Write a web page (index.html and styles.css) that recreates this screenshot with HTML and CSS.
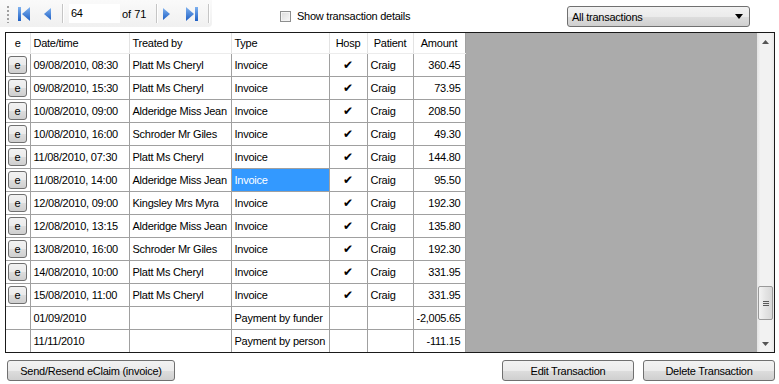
FILE: index.html
```html
<!DOCTYPE html>
<html>
<head>
<meta charset="utf-8">
<link rel="stylesheet" href="styles.css">
</head>
<body>
<div class="app">
  <div class="topbar">
    <div class="toolstrip">
      <span class="grip"></span>
      <span class="tbtn first"><svg width="13" height="14" viewBox="0 0 13 14"><defs><linearGradient id="bl" x1="0" y1="0" x2="0" y2="1"><stop offset="0" stop-color="#7fb2f0"/><stop offset="1" stop-color="#1e5fc4"/></linearGradient></defs><rect x="0" y="0" width="3" height="14" fill="url(#bl)"/><path d="M12 0 L4 7 L12 14 Z" fill="url(#bl)"/></svg></span>
      <span class="tbtn prev"><svg width="7" height="12" viewBox="0 0 7 12"><defs><linearGradient id="bl2" x1="0" y1="0" x2="0" y2="1"><stop offset="0" stop-color="#7fb2f0"/><stop offset="1" stop-color="#1e5fc4"/></linearGradient></defs><path d="M7 0 L0 6 L7 12 Z" fill="url(#bl2)"/></svg></span>
      <span class="sep"></span>
      <span class="pos">64</span>
      <span class="of">of 71</span>
      <span class="sep"></span>
      <span class="tbtn next"><svg width="7" height="12" viewBox="0 0 7 12"><defs><linearGradient id="bl3" x1="0" y1="0" x2="0" y2="1"><stop offset="0" stop-color="#7fb2f0"/><stop offset="1" stop-color="#1e5fc4"/></linearGradient></defs><path d="M0 0 L7 6 L0 12 Z" fill="url(#bl3)"/></svg></span>
      <span class="tbtn last"><svg width="13" height="14" viewBox="0 0 13 14"><defs><linearGradient id="bl4" x1="0" y1="0" x2="0" y2="1"><stop offset="0" stop-color="#7fb2f0"/><stop offset="1" stop-color="#1e5fc4"/></linearGradient></defs><path d="M1 0 L9 7 L1 14 Z" fill="url(#bl4)"/><rect x="10" y="0" width="3" height="14" fill="url(#bl4)"/></svg></span>
      <span class="sep"></span>
    </div>
    <label class="check"><span class="box"></span>Show transaction details</label>
    <div class="combo"><span>All transactions</span><svg width="8" height="5" viewBox="0 0 8 5"><path d="M0 0 H8 L4 5 Z" fill="#000"/></svg></div>
  </div>

  <div class="grid">
    <table class="tbl">
      <colgroup><col class="c-e"><col class="c-date"><col class="c-tr"><col class="c-type"><col class="c-hosp"><col class="c-pat"><col class="c-amt"></colgroup>
      <thead>
        <tr><th class="center">e</th><th>Date/time</th><th>Treated by</th><th>Type</th><th class="center">Hosp</th><th class="center">Patient</th><th class="center">Amount</th></tr>
      </thead>
      <tbody>
        <tr><td class="eb"><span class="ebtn">e</span></td><td>09/08/2010, 08:30</td><td>Platt Ms Cheryl</td><td>Invoice</td><td class="center tick">✔</td><td>Craig</td><td class="num">360.45</td></tr>
        <tr><td class="eb"><span class="ebtn">e</span></td><td>09/08/2010, 15:30</td><td>Platt Ms Cheryl</td><td>Invoice</td><td class="center tick">✔</td><td>Craig</td><td class="num">73.95</td></tr>
        <tr><td class="eb"><span class="ebtn">e</span></td><td>10/08/2010, 09:00</td><td>Alderidge Miss Jean</td><td>Invoice</td><td class="center tick">✔</td><td>Craig</td><td class="num">208.50</td></tr>
        <tr><td class="eb"><span class="ebtn">e</span></td><td>10/08/2010, 16:00</td><td>Schroder Mr Giles</td><td>Invoice</td><td class="center tick">✔</td><td>Craig</td><td class="num">49.30</td></tr>
        <tr><td class="eb"><span class="ebtn">e</span></td><td>11/08/2010, 07:30</td><td>Platt Ms Cheryl</td><td>Invoice</td><td class="center tick">✔</td><td>Craig</td><td class="num">144.80</td></tr>
        <tr><td class="eb"><span class="ebtn">e</span></td><td>11/08/2010, 14:00</td><td>Alderidge Miss Jean</td><td class="sel">Invoice</td><td class="center tick">✔</td><td>Craig</td><td class="num">95.50</td></tr>
        <tr><td class="eb"><span class="ebtn">e</span></td><td>12/08/2010, 09:00</td><td>Kingsley Mrs Myra</td><td>Invoice</td><td class="center tick">✔</td><td>Craig</td><td class="num">192.30</td></tr>
        <tr><td class="eb"><span class="ebtn">e</span></td><td>12/08/2010, 13:15</td><td>Alderidge Miss Jean</td><td>Invoice</td><td class="center tick">✔</td><td>Craig</td><td class="num">135.80</td></tr>
        <tr><td class="eb"><span class="ebtn">e</span></td><td>13/08/2010, 16:00</td><td>Schroder Mr Giles</td><td>Invoice</td><td class="center tick">✔</td><td>Craig</td><td class="num">192.30</td></tr>
        <tr><td class="eb"><span class="ebtn">e</span></td><td>14/08/2010, 10:00</td><td>Platt Ms Cheryl</td><td>Invoice</td><td class="center tick">✔</td><td>Craig</td><td class="num">331.95</td></tr>
        <tr><td class="eb"><span class="ebtn">e</span></td><td>15/08/2010, 11:00</td><td>Platt Ms Cheryl</td><td>Invoice</td><td class="center tick">✔</td><td>Craig</td><td class="num">331.95</td></tr>
        <tr><td class="eb"></td><td>01/09/2010</td><td></td><td>Payment by funder</td><td></td><td></td><td class="num">-2,005.65</td></tr>
        <tr><td class="eb"></td><td>11/11/2010</td><td></td><td>Payment by person</td><td></td><td></td><td class="num">-111.15</td></tr>
      </tbody>
    </table>
    <div class="fill"></div>
    <div class="vscroll">
      <span class="arrow"><svg width="7" height="4" viewBox="0 0 7 4"><path d="M0 4 L3.5 0 L7 4 Z" fill="#555"/></svg></span>
      <span class="track"></span>
      <span class="thumb"><i></i><i></i><i></i></span>
      <span class="track small"></span>
      <span class="arrow"><svg width="7" height="4" viewBox="0 0 7 4"><path d="M0 0 L7 0 L3.5 4 Z" fill="#555"/></svg></span>
    </div>
  </div>

  <div class="buttons">
    <button class="btn wide">Send/Resend eClaim (invoice)</button>
    <span class="spacer"></span>
    <button class="btn">Edit Transaction</button>
    <button class="btn">Delete Transaction</button>
  </div>
</div>
</body>
</html>
```
FILE: styles.css
```css
html, body {
  margin: 0;
  padding: 0;
  background: #ffffff;
}
body {
  font-family: "Liberation Sans", Arial, sans-serif;
  font-size: 11px;
  letter-spacing: -0.25px;
  color: #000;
  width: 779px;
  height: 384px;
  overflow: hidden;
}
.app {
  display: flex;
  flex-direction: column;
}
.topbar {
  height: 32px;
  display: flex;
  align-items: flex-start;
}
.toolstrip {
  flex: none;
  height: 27px;
  width: 212px;
  box-sizing: border-box;
  padding-left: 7px;
  display: flex;
  align-items: center;
  background: linear-gradient(#fafafa, #f0f0f0);
  border-bottom-right-radius: 4px;
}
.toolstrip > * { flex: none; }
.grip {
  width: 2px;
  height: 18px;
  margin-right: 9px;
  background-image: radial-gradient(circle, #a0a0a0 0.8px, transparent 1px);
  background-size: 2px 4px;
}
.tbtn {
  display: inline-flex;
  align-items: center;
  justify-content: center;
  height: 16px;
}
.tbtn.first { width: 13px; margin-right: 13px; }
.tbtn.prev { width: 7px; margin-right: 11px; }
.tbtn.next { width: 7px; margin-right: 15px; }
.tbtn.last { width: 13px; margin-right: 10px; }
.sep {
  width: 1px;
  height: 19px;
  background: #c5c5c5;
  border-right: 1px solid #fff;
  margin-right: 5px;
}
.pos {
  width: 49px;
  height: 19px;
  line-height: 19px;
  background: #fff;
  padding-left: 2px;
}
.of {
  white-space: nowrap;
  width: 28px;
  margin-left: 2px;
  margin-right: 6px;
  letter-spacing: 0;
}
.check {
  display: flex;
  align-items: center;
  margin-left: 68px;
  margin-top: 9px;
  height: 14px;
}
.box {
  width: 11px;
  height: 11px;
  border: 1px solid #8e8f8f;
  background: linear-gradient(135deg, #dcdcdc, #f8f8f8);
  margin-right: 6px;
  box-sizing: border-box;
  box-shadow: inset 0 0 0 1px #f4f4f4;
}
.combo {
  margin-left: auto;
  margin-right: 29px;
  margin-top: 6px;
  width: 183px;
  height: 21px;
  box-sizing: border-box;
  border: 1px solid #707070;
  border-radius: 3px;
  background: linear-gradient(#f2f2f2 0%, #ebebeb 50%, #dddddd 51%, #cfcfcf 100%);
  display: flex;
  align-items: center;
  justify-content: space-between;
  padding: 0 6px 0 4px;
}
.grid {
  margin-left: 5px;
  width: 770px;
  height: 321px;
  box-sizing: border-box;
  border: 1px solid #1a1a1a;
  display: flex;
  overflow: hidden;
}
.tbl {
  border-collapse: collapse;
  table-layout: fixed;
  width: 459px;
  align-self: flex-start;
}
.c-e { width: 24px; }
.c-date { width: 99px; }
.c-tr { width: 102px; }
.c-type { width: 98px; }
.c-hosp { width: 38px; }
.c-pat { width: 46px; }
.c-amt { width: 52px; }
th {
  height: 20px;
  padding: 0 3px;
  font-weight: normal;
  text-align: left;
  border-right: 1px solid #e3e3e3;
  border-bottom: 1px solid #ececec;
  background: #fff;
  white-space: nowrap;
  box-sizing: border-box;
}
th:last-child { border-right: 1px solid #a0a0a0; }
td {
  height: 23px;
  box-sizing: border-box;
  padding: 0 3px;
  border-right: 1px solid #a0a0a0;
  border-bottom: 1px solid #a0a0a0;
  white-space: nowrap;
  overflow: hidden;
}
.center { text-align: center; }
.num { text-align: right; padding-right: 4px; }
.tick { font-size: 12px; padding: 0; }
.sel { background: #3399ff; color: #fff; }
td.eb { padding: 0 0 0 2px; }
.ebtn {
  display: flex;
  align-items: center;
  justify-content: center;
  width: 19px;
  height: 18px;
  box-sizing: border-box;
  border: 1px solid #707070;
  border-radius: 3px;
  background: linear-gradient(#f2f2f2 0%, #ebebeb 50%, #dddddd 51%, #cfcfcf 100%);
}
.fill {
  flex: 1;
  background: #ababab;
}
.vscroll {
  width: 17px;
  display: flex;
  flex-direction: column;
  background: linear-gradient(90deg, #e3e3e3, #f2f2f2 20%, #f2f2f2 80%, #e8e8e8);
}
.arrow {
  height: 17px;
  display: flex;
  align-items: center;
  justify-content: center;
}
.track { flex: 1; }
.track.small { flex: none; height: 15px; }
.thumb {
  height: 34px;
  margin: 0 1px;
  box-sizing: border-box;
  border: 1px solid #9a9a9a;
  border-radius: 2px;
  background: linear-gradient(90deg, #f3f3f3, #e4e4e4 50%, #d8d8d8);
  display: flex;
  flex-direction: column;
  align-items: center;
  justify-content: center;
  gap: 1px;
}
.thumb i {
  display: block;
  width: 6px;
  height: 1px;
  background: #5a5a5a;
}
.buttons {
  display: flex;
  align-items: center;
  padding: 7px 4px 0 7px;
  gap: 9px;
}
.spacer { flex: 1; }
.btn {
  font-family: "Liberation Sans", Arial, sans-serif;
  font-size: 11px;
  letter-spacing: -0.25px;
  color: #000;
  height: 21px;
  width: 132px;
  box-sizing: border-box;
  border: 1px solid #707070;
  border-radius: 3px;
  background: linear-gradient(#f2f2f2 0%, #ebebeb 50%, #dddddd 51%, #cfcfcf 100%);
  padding: 0;
}
.btn.wide { width: 168px; }
```
